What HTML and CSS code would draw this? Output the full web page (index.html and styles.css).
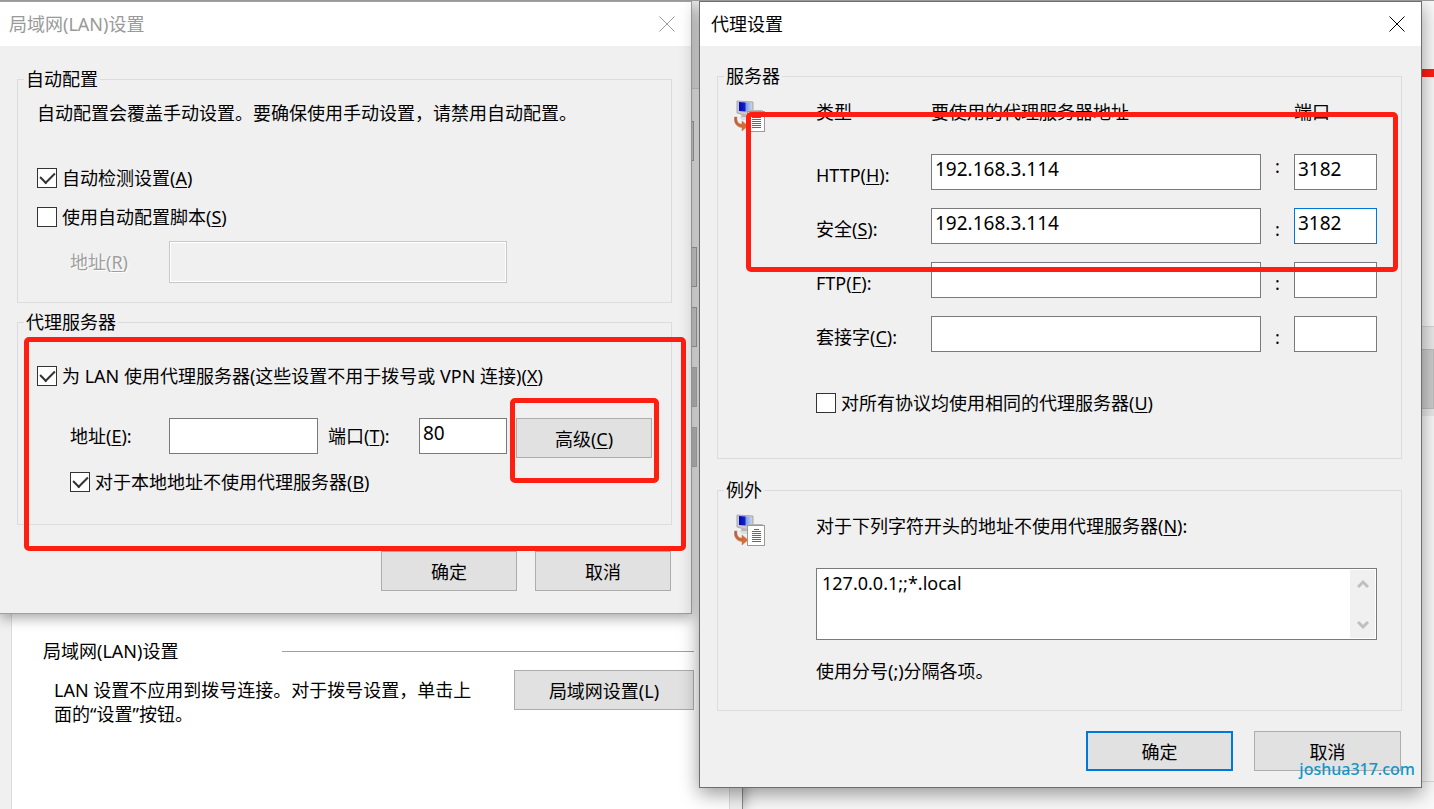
FILE: index.html
```html
<!DOCTYPE html>
<html lang="zh-CN">

<head>
    <meta charset="UTF-8">
    <meta name="viewport" content="width=device-width, initial-scale=1.0">
    <title>代理设置</title>
    <link rel="stylesheet" href="styles.css">
</head>

<body>
    <svg width="0" height="0" class="defs" aria-hidden="true">
        <defs>
            <linearGradient id="screen" x1="0" y1="0" x2="1" y2="0">
                <stop offset="0" stop-color="#0507b8"/>
                <stop offset="0.45" stop-color="#1420c4"/>
                <stop offset="0.55" stop-color="#7f9bea"/>
                <stop offset="1" stop-color="#c4d6fa"/>
            </linearGradient>
            <linearGradient id="arrow" x1="0" y1="0" x2="1" y2="1">
                <stop offset="0" stop-color="#a8604a"/>
                <stop offset="1" stop-color="#f0702a"/>
            </linearGradient>
            <symbol id="server" viewBox="0 0 32 32">
                <path d="M3 1 L19 2 L19 15 L14 16 L3 13 Z" fill="#c9c9c9" stroke="#a9a9a9"/>
                <path d="M5 2 L18 3 L17 12 L5 11 Z" fill="url(#screen)"/>
                <path d="M8 14 L13 15 L13 18 L7 17 Z" fill="#b5b5b5"/>
                <path d="M5 17 L13 17 L15 20 L8 20 Z" fill="#dedede"/>
                <path d="M0.500 17 C-0.500 23 3 27.500 8 27.500 L8 31 L14 26 L8 21 L8 24 C4 24 2.500 21 3 17 Z" fill="url(#arrow)" stroke="#c07a58" stroke-width="0.5"/>
                <path d="M13 10.500 H28.500 V12" fill="#fff" stroke="#b5b5b5"/>
                <rect x="13.500" y="11.500" width="17" height="20" fill="#fff" stroke="#9a9a9a"/>
                <path d="M20 15.500 H25 M18 17.500 H27 M18 19.500 H27 M18 21.500 H27 M18 23.500 H27 M18 25.500 H27 M18 27.500 H27" stroke="#1f78cc" fill="none"/>
            </symbol>
            <symbol id="close" viewBox="0 0 16 16">
                <path d="M0.500 0.500 L15.500 15.500 M15.500 0.500 L0.500 15.500" stroke="currentColor" fill="none"/>
            </symbol>
        </defs>
    </svg>

    <div class="desktop">
        <div class="options">
            <div class="tabs"></div>
            <div class="panel">
                <div class="side-buttons">
                    <div class="stub first"></div>
                    <div class="stub"></div>
                    <div class="stub"></div>
                    <div class="stub dark"></div>
                    <div class="stub dark"></div>
                </div>
                <div class="heading">
                    <span>局域网(LAN)设置</span>
                    <div class="rule"></div>
                </div>
                <div class="lan-row">
                    <p>LAN 设置不应用到拨号连接。对于拨号设置，单击上面的“设置”按钮。</p>
                    <button class="btn">局域网设置(L)</button>
                </div>
            </div>
        </div>
        <div class="backdrop">
            <div class="red-line"></div>
            <div class="band light"></div>
            <div class="band grey"></div>
            <div class="band thin"></div>
            <div class="bottom-line"></div>
        </div>

        <div class="dialog lan">
            <div class="titlebar">
                <span>局域网(LAN)设置</span>
                <button class="close" aria-label="关闭"><svg><use href="#close"/></svg></button>
            </div>
            <div class="content">
                <fieldset class="auto">
                    <legend>自动配置</legend>
                    <p>自动配置会覆盖手动设置。要确保使用手动设置，请禁用自动配置。</p>
                    <label class="check"><input type="checkbox" checked><span>自动检测设置(<u>A</u>)</span></label>
                    <label class="check"><input type="checkbox"><span>使用自动配置脚本(<u>S</u>)</span></label>
                    <div class="address-row">
                        <label class="disabled" for="script">地址(<u>R</u>)</label>
                        <input class="script" type="text" id="script" disabled>
                    </div>
                </fieldset>
                <fieldset class="proxy">
                    <legend>代理服务器</legend>
                    <label class="check"><input type="checkbox" checked><span>为 LAN 使用代理服务器(这些设置不用于拨号或 VPN 连接)(<u>X</u>)</span></label>
                    <div class="address-row">
                        <label for="addr">地址(<u>E</u>):</label>
                        <input type="text" id="addr">
                        <label class="port-label" for="port">端口(<u>T</u>):</label>
                        <input type="text" id="port" value="80">
                        <button class="btn advanced">高级(<u>C</u>)</button>
                    </div>
                    <label class="check indent"><input type="checkbox" checked><span>对于本地地址不使用代理服务器(<u>B</u>)</span></label>
                </fieldset>
                <div class="actions">
                    <button class="btn">确定</button>
                    <button class="btn">取消</button>
                </div>
            </div>
            <div class="mark mark-proxy"></div>
            <div class="mark mark-advanced"></div>
        </div>

        <div class="dialog settings">
            <div class="titlebar">
                <span>代理设置</span>
                <button class="close" aria-label="关闭"><svg><use href="#close"/></svg></button>
            </div>
            <div class="content">
                <fieldset class="servers">
                    <legend>服务器</legend>
                    <div class="group">
                        <svg class="icon"><use href="#server"/></svg>
                        <div class="fields">
                            <div class="server-row head">
                                <span>类型</span>
                                <span>要使用的代理服务器地址</span>
                                <span></span>
                                <span>端口</span>
                            </div>
                            <div class="server-row">
                                <label for="http">HTTP(<u>H</u>):</label>
                                <input type="text" id="http" value="192.168.3.114">
                                <span class="colon top">:</span>
                                <input type="text" aria-label="HTTP 端口" value="3182">
                            </div>
                            <div class="server-row">
                                <label for="secure">安全(<u>S</u>):</label>
                                <input type="text" id="secure" value="192.168.3.114">
                                <span class="colon">:</span>
                                <input class="active" type="text" aria-label="安全端口" value="3182">
                            </div>
                            <div class="server-row">
                                <label for="ftp">FTP(<u>F</u>):</label>
                                <input type="text" id="ftp">
                                <span class="colon">:</span>
                                <input type="text" aria-label="FTP 端口">
                            </div>
                            <div class="server-row">
                                <label for="socks">套接字(<u>C</u>):</label>
                                <input type="text" id="socks">
                                <span class="colon">:</span>
                                <input type="text" aria-label="套接字端口">
                            </div>
                            <label class="check same"><input type="checkbox"><span>对所有协议均使用相同的代理服务器(<u>U</u>)</span></label>
                        </div>
                    </div>
                </fieldset>
                <fieldset class="exceptions">
                    <legend>例外</legend>
                    <div class="group">
                        <svg class="icon"><use href="#server"/></svg>
                        <div class="fields">
                            <label for="bypass">对于下列字符开头的地址不使用代理服务器(<u>N</u>):</label>
                            <div class="textbox">
                                <textarea id="bypass">127.0.0.1;;*.local</textarea>
                                <div class="scrollbar">
                                    <svg viewBox="0 0 12 10"><path d="M1 8 L6 3 L11 8"/></svg>
                                    <svg viewBox="0 0 12 10"><path d="M1 2 L6 7 L11 2"/></svg>
                                </div>
                            </div>
                            <p>使用分号(;)分隔各项。</p>
                        </div>
                    </div>
                </fieldset>
                <div class="actions">
                    <button class="btn default">确定</button>
                    <button class="btn">取消</button>
                </div>
            </div>
            <div class="mark mark-servers"></div>
        </div>

        <div class="watermark">joshua317.com</div>
    </div>
</body>

</html>
```
FILE: styles.css
```css
* {
    box-sizing: border-box;
}

body {
    margin: 0;
    font-family: "Noto Sans", "Noto Sans CJK SC", sans-serif;
    font-size: 18px;
    line-height: 24px;
    color: #000;
    background-color: #f9f9f9;
}

p {
    margin: 0;
}

u {
    text-underline-offset: 2px;
    text-decoration-thickness: 1px;
}

.defs {
    position: absolute;
}

.desktop {
    position: relative;
    display: flex;
    min-height: 100vh;
    overflow: hidden;
    border-top: 1px solid #999;
}

/* internet options window at the back */
.options {
    display: flex;
    flex-direction: column;
    width: calc(50% + 26px);
    padding: 0 12px 0 11px;
    background-color: #f0f0f0;
    border-right: 1px solid #888;
    box-shadow: 0 0 14px rgba(0, 0, 0, 0.4);
    z-index: 1;
}

.tabs {
    height: 87px;
}

.panel {
    flex: 1;
    padding: 0 35px 0 31px;
    background-color: #fff;
    border: 1px solid #dcdcdc;
    border-bottom: none;
}

.side-buttons {
    display: flex;
    flex-direction: column;
    align-items: flex-end;
    gap: 20px;
    margin-right: -3px;
    padding-top: 32px;
}

.stub {
    width: 136px;
    height: 40px;
    background-color: #e1e1e1;
    border: 1px solid #adadad;
}

.stub.first {
    margin-right: 3px;
    margin-bottom: 66px;
}

.stub.dark {
    background-color: #ccc;
    border-color: #bfbfbf;
}

.heading {
    display: flex;
    align-items: center;
    gap: 104px;
    margin-top: 172px;
}

.rule {
    flex: 1;
    height: 1px;
    background-color: #a0a0a0;
}

.lan-row {
    display: flex;
    justify-content: space-between;
    margin-top: 7px;
    padding-left: 11px;
}

.lan-row p {
    width: 424px;
    padding-top: 8px;
}

.lan-row .btn {
    width: 180px;
}

.backdrop {
    flex: 1;
}

.red-line {
    height: 8px;
    margin-top: 68px;
    background-color: #ff1e12;
}

.band.light {
    height: 23px;
    margin-top: 249px;
    background-color: #e9e9e9;
    border-top: 1px solid #d4d4d4;
}

.band.grey {
    height: 60px;
    background-color: #cdcdcd;
    border: 1px solid #bdbdbd;
}

.band.thin {
    height: 7px;
    background-color: #e9e9e9;
}

.bottom-line {
    height: 366px;
    border-bottom: 1px solid #d9d9d9;
}

/* dialogs */
.dialog {
    position: absolute;
    top: 0;
    z-index: 2;
    background-color: #f0f0f0;
}

.lan {
    left: 0;
    width: calc(50% - 25px);
    border: 1px solid #a0a0a0;
    border-left: none;
    box-shadow: 0 4px 12px rgba(0, 0, 0, 0.35);
}

.settings {
    left: calc(50% - 18px);
    right: 12px;
    z-index: 3;
    border: 1px solid #6e6e6e;
    box-shadow: 0 6px 18px rgba(0, 0, 0, 0.4);
}

.titlebar {
    display: flex;
    align-items: center;
    justify-content: space-between;
    height: 44px;
    padding: 0 16px 0 11px;
    background-color: #fff;
}

.lan .titlebar {
    padding-left: 9px;
    color: #999;
}

.close {
    display: flex;
    padding: 0;
    color: inherit;
    background: none;
    border: none;
}

.close svg {
    width: 16px;
    height: 16px;
}

.content {
    padding: 21px 19px 22px 17px;
}

.settings .content {
    padding: 18px 19px 16px 17px;
}

fieldset {
    min-width: 0;
    margin: 0;
    padding: 10px 19px 19px;
    border: 1px solid #dcdcdc;
}

legend {
    margin-left: -13px;
    padding: 0 2px;
}

.proxy {
    margin-top: 7px;
    padding-top: 30px;
    padding-bottom: 30px;
}

.check {
    display: flex;
    align-items: center;
    gap: 5px;
}

.auto .check {
    margin-top: 15px;
}

.auto p + .check {
    margin-top: 41px;
}

.proxy .indent {
    margin-top: 12px;
    padding-left: 33px;
}

input[type="checkbox"] {
    display: grid;
    place-items: center;
    flex: none;
    width: 20px;
    height: 20px;
    margin: 0;
    appearance: none;
    background-color: #fff;
    border: 1px solid #333;
}

input[type="checkbox"]:checked::after {
    content: "";
    width: 7px;
    height: 12px;
    margin-bottom: 4px;
    border: solid #333;
    border-width: 0 2px 2px 0;
    transform: rotate(45deg);
}

input[type="text"] {
    width: 100%;
    min-width: 0;
    height: 36px;
    padding: 0 3px 6px;
    font-family: inherit;
    font-size: 19px;
    color: #000;
    background-color: #fff;
    border: 1px solid #7a7a7a;
    border-radius: 0;
}

input[type="text"].active {
    border-color: #0078d7;
}

.address-row {
    display: grid;
    grid-template-columns: 99px 1fr 101px 88px 145px;
    align-items: center;
    margin-top: 12px;
    padding-left: 33px;
}

.proxy .address-row {
    align-items: start;
    margin-top: 30px;
}

.proxy .address-row label {
    padding-top: 6px;
}

.disabled {
    color: #9f9f9f;
    text-shadow: 1px 1px #fff;
}

input[type="text"].script {
    grid-column: 2 / 5;
    height: 42px;
    background-color: #f0f0f0;
    border-color: #c8c8c8;
    box-shadow: inset 0 0 0 1px #fff;
}

.port-label {
    margin-left: 10px;
}

.btn {
    height: 40px;
    padding: 0;
    font-family: inherit;
    font-size: 18px;
    color: #000;
    background-color: #e1e1e1;
    border: 1px solid #adadad;
}

.btn.default {
    border: 2px solid #0078d7;
}

.advanced {
    margin-left: 9px;
}

.actions {
    display: flex;
    justify-content: flex-end;
    gap: 18px;
    margin-top: 26px;
    padding-right: 1px;
}

.actions .btn {
    width: 136px;
}

.settings .actions {
    gap: 21px;
    margin-top: 20px;
}

.settings .actions .btn {
    width: 147px;
}

/* proxy settings dialog */
.settings fieldset {
    padding: 12px 24px 43px 16px;
}

.settings legend {
    margin-left: -10px;
}

.settings .exceptions {
    margin-top: 19px;
    padding-bottom: 27px;
}

.group {
    display: flex;
    gap: 50px;
}

.icon {
    flex: none;
    width: 32px;
    height: 32px;
}

.fields {
    flex: 1;
    min-width: 0;
}

.server-row {
    display: grid;
    grid-template-columns: 115px 1fr 33px 83px;
    align-items: center;
    margin-bottom: 18px;
}

.server-row.head {
    margin-bottom: 30px;
}

.server-row label,
.colon {
    padding-top: 5px;
}

.colon {
    text-align: center;
}

.colon.top {
    align-self: start;
    padding-top: 0;
}

.same {
    margin-top: 39px;
}

.textbox {
    display: flex;
    height: 72px;
    margin: 30px 0 19px;
    padding: 1px;
    background-color: #fff;
    border: 1px solid #7a7a7a;
}

.textbox textarea {
    flex: 1;
    padding: 1px 4px;
    font-family: inherit;
    font-size: 18px;
    line-height: 24px;
    color: #000;
    resize: none;
    border: none;
    overflow: hidden;
}

.scrollbar {
    display: flex;
    flex-direction: column;
    align-items: center;
    justify-content: space-between;
    width: 25px;
    padding: 9px 0 8px;
    background-color: #f0f0f0;
}

.scrollbar svg {
    width: 12px;
    height: 10px;
    fill: none;
    stroke: #bfbfbf;
    stroke-width: 3;
}

/* red highlights */
.mark {
    position: absolute;
    border: 5px solid #ff1e12;
    border-radius: 5px;
    pointer-events: none;
}

.mark-proxy {
    top: 335px;
    left: 24px;
    right: 5px;
    height: 214px;
}

.mark-advanced {
    top: 396px;
    right: 32px;
    width: 149px;
    height: 85px;
}

.mark-servers {
    top: 110px;
    left: 46px;
    right: 23px;
    height: 160px;
}

.watermark {
    position: absolute;
    right: 19px;
    top: 756px;
    z-index: 4;
    font-size: 16px;
    font-weight: 500;
    color: #1296c8;
}
```
